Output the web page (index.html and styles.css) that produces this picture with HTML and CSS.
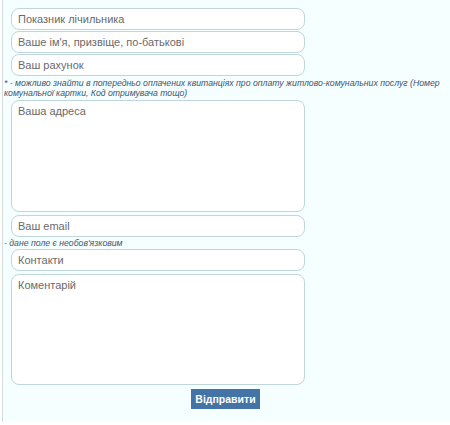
FILE: index.html
```html
<!DOCTYPE html>
<html>
<head>
<meta charset="utf-8">
<link rel="stylesheet" href="styles.css">
</head>
<body>
<div class="page">
  <form class="form">
    <div class="field">Показник лічильника</div>
    <div class="field">Ваше ім'я, призвіще, по-батькові</div>
    <div class="field">Ваш рахунок</div>
    <p class="note">* - можливо знайти в попередньо оплачених квитанціях про оплату житлово-комунальних послуг (Номер комунальної картки, Код отримувача тощо)</p>
    <div class="field area">Ваша адреса</div>
    <div class="field email">Ваш email</div>
    <p class="note small">- дане поле є необов'язковим</p>
    <div class="field contacts">Контакти</div>
    <div class="field area comment">Коментарій</div>
    <div class="actions"><button type="button" class="btn">Відправити</button></div>
  </form>
</div>
</body>
</html>
```
FILE: styles.css
```css
html, body { margin: 0; padding: 0; background: #ffffff; }
.page {
  margin-left: 2px;
  width: 448px;
  height: 422px;
  background: #f6ffff;
  border-left: 1px solid #d5dcdc;
  box-sizing: border-box;
  padding: 8px 0 0 8px;
  font-family: "Liberation Sans", Arial, sans-serif;
}
.form { display: flex; flex-direction: column; width: 294px; }
.field {
  box-sizing: border-box;
  height: 22px;
  border: 1px solid #bfd6dc;
  border-radius: 8px;
  background: #ffffff;
  color: #6a6a6a;
  font-size: 11px;
  padding: 4px 6px;
  line-height: 13px;
  margin-bottom: 1px;
}
.field.area { height: 112px; margin-bottom: 3px; }
.field.comment { height: 111px; }
.field.contacts { margin-bottom: 3px; }
.note {
  margin: 1px 0 2px -7px;
  width: 440px;
  font-style: italic;
  font-size: 8.7px;
  line-height: 10px;
  color: #3a5570;
}
.note.small { margin: 0 0 1px -7px; }
.field.email { margin-bottom: 1px; }
.actions { display: flex; justify-content: flex-start; padding-left: 180px; margin-top: 1px; }
.btn {
  border: 0;
  background: #4474a6;
  color: #ffffff;
  font-family: "Liberation Sans", Arial, sans-serif;
  font-weight: bold;
  font-size: 10.5px;
  width: 69px;
  height: 20px;
  padding: 0;
}
```
